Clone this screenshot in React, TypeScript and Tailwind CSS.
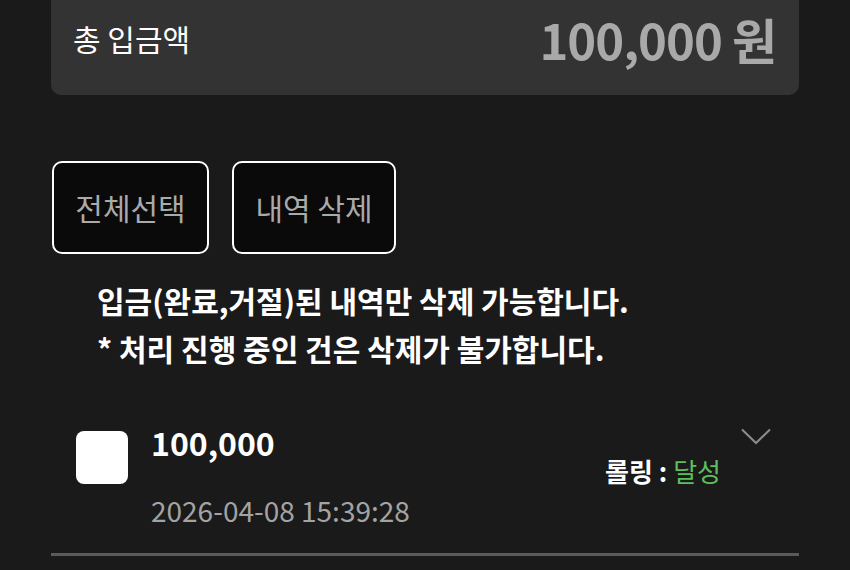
export default function App() {
  return (
    <div
      className="min-h-[570px] w-[850px] overflow-hidden bg-[#1a1a1a] px-[51px] text-white"
      style={{ fontFamily: '"Noto Sans CJK KR", "Noto Sans", sans-serif' }}
    >
      {/* total card */}
      <div className="-mt-[15px] flex h-[110px] items-center justify-between rounded-[10px] bg-[#333333] pl-[22px] pr-[23px]">
        <span className="-mt-[4px] text-[30px] leading-[40px] text-white">총 입금액</span>
        <span className="-mt-[2px] text-[49px] font-bold leading-[56px] tracking-[-1px] text-[#a9a9a9]">
          100,000 원
        </span>
      </div>

      {/* actions */}
      <div className="mt-[66px] flex gap-[23px] pl-[1px]">
        <button className="flex h-[93px] w-[157px] items-center justify-center rounded-[10px] border-2 border-white bg-[#0a0a0a] text-[30px] text-[#aaaaaa]">
          전체선택
        </button>
        <button className="flex h-[93px] w-[164px] items-center justify-center rounded-[10px] border-2 border-white bg-[#0a0a0a] text-[30px] text-[#aaaaaa]">
          내역 삭제
        </button>
      </div>

      {/* notice */}
      <div className="mt-[22px] pl-[46px] text-[30px] font-bold leading-[48px] text-white">
        <p>입금(완료,거절)된 내역만 삭제 가능합니다.</p>
        <p>* 처리 진행 중인 건은 삭제가 불가합니다.</p>
      </div>

      {/* history row */}
      <div className="mt-[55px] flex pl-[25px]">
        <div className="mt-[4px] h-[53px] w-[52px] shrink-0 rounded-[8px] bg-white" />
        <div className="ml-[23px] flex-1">
          <div className="-mt-[3px] text-[32px] font-bold leading-[36px]">100,000</div>
          <div className="mt-[32px] text-[28px] leading-[36px] text-[#a3a3a3]">2026-04-08 15:39:28</div>
        </div>
        <div className="mt-[28px] text-[26px] leading-[32px]">
          <span className="font-bold text-white">롤링 : </span>
          <span className="text-[#5cbf5c]">달성</span>
        </div>
        <svg className="ml-[20px] mr-[28px] mt-[1px]" width="30" height="17" viewBox="0 0 30 17" fill="none">
          <path d="M1 1.5 L15 15 L29 1.5" stroke="#8a8a8a" strokeWidth="2.2" />
        </svg>
      </div>

      <div className="mt-[25px] h-[3px] bg-[#5a5a5a]" />
    </div>
  )
}
